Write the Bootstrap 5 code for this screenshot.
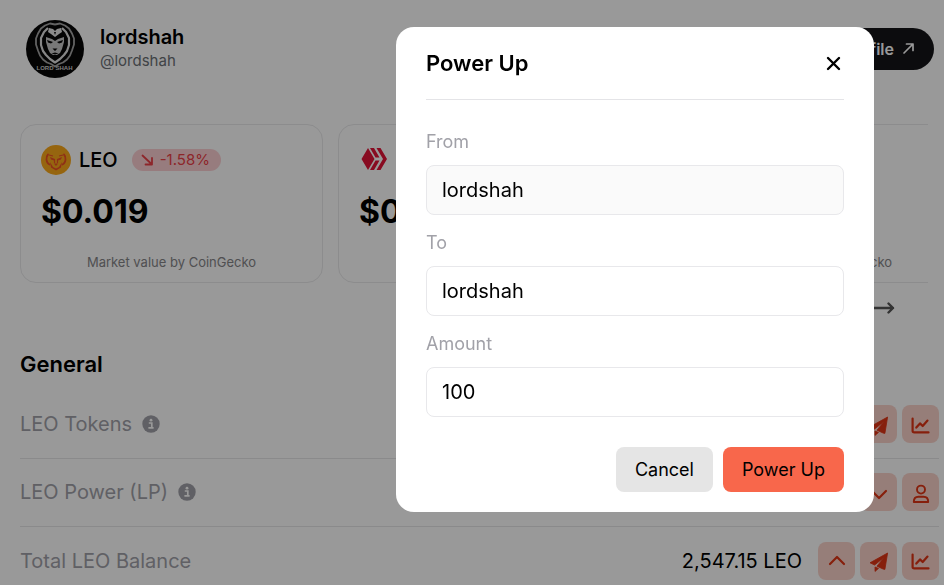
<!DOCTYPE html>
<html lang="en">
<head>
<meta charset="utf-8">
<meta name="viewport" content="width=device-width, initial-scale=1">
<title>Wallet</title>
<link rel="stylesheet" href="https://cdn.jsdelivr.net/npm/bootstrap@5.3.0/dist/css/bootstrap.min.css">
<style>
  body { font-family: Inter, "Liberation Sans", sans-serif; color: #000; background: #fff; overflow: hidden; }
  .page-head { padding: 20px 10px 0 26px; }
  .user-block { margin-left: 16px; padding-bottom: 2px; }
  .user-name { font-size: 20px; line-height: 26px; }
  .user-handle { font-size: 15px; line-height: 22px; color: #6b7075; }
  .btn-profile { background: #151518; color: #fff; font-size: 16px; line-height: 24px; padding: 9px 18px 9px 24px; border: 0; }
  .token-strip { margin: 46px 16px 0 20px; gap: 15px; overflow: hidden; }
  .token-card { flex: 0 0 303px; height: 159px; padding: 20px 20px 10px; border: 1px solid #e9e9eb; border-radius: 16px; }
  .token-name { font-size: 20px; line-height: 30px; }
  .change-pill { margin-left: 6px; padding: 0 11px 0 8px; gap: 6px; font-size: 15px; line-height: 22px; background: #fccfd3; color: #ec4047; }
  .token-price { margin-top: 15px; font-size: 32px; line-height: 44px; }
  .token-source { font-size: 13px; line-height: 20px; color: #858588; }
  .strip-nav { padding: 14px 48px 0 0; gap: 16px; color: #555; }
  .plain-btn { padding: 0; border: 0; background: none; color: inherit; line-height: 0; }
  .balances { padding: 30px 5px 0 20px; }
  .balances h2 { font-size: 22px; line-height: 30px; margin: 0 0 12px; }
  .balance-row { height: 68px; padding-bottom: 1px; border-bottom: 1px solid #e6e6e8; font-size: 20px; }
  .balance-row:last-child { border-bottom: 0; }
  .balance-label { color: #a1a1a8; gap: 10px; }
  .tools { gap: 5px; margin-left: 16px; }
  .tool { width: 37px; height: 38px; border: 0; border-radius: 8px; background: #fad3ca; color: #e03414; padding: 0; }
  .overlay { background: rgba(0, 0, 0, .4); overflow: hidden; }
  .power-dialog { max-width: 478px; margin: 27px 70px 0 auto; }
  .power-box { border: 0; border-radius: 18px; padding: 0 30px 20px; color: #000; }
  .power-head { height: 73px; padding: 0; border-color: #e4e4e7; border-radius: 0; }
  .power-head h1 { font-size: 22px; line-height: 30px; }
  .power-body { padding: 28px 0 0; gap: 14px; }
  .power-body label { display: block; font-size: 18px; line-height: 27px; margin-bottom: 10px; color: #a1a1a8; }
  .power-body .form-control { height: 50px; padding: 0 15px; border: 1px solid #e8e8eb; border-radius: 8px; font-size: 20px; color: #000; }
  .power-body .form-control[readonly] { background: #fafafa; }
  .power-foot { padding-top: 30px; gap: 10px; }
  .power-foot .btn { padding: 9px 19px; font-size: 18px; line-height: 27px; border: 0; border-radius: 8px; color: #000; }
  .power-foot .btn-cancel { background: #e5e5e5; }
  .power-foot .btn-power { background: #f8674b; }
</style>
<script src="https://cdn.jsdelivr.net/npm/bootstrap@5.3.0/dist/js/bootstrap.bundle.min.js"></script>
</head>
<body>
<svg class="d-none" aria-hidden="true">
  <symbol id="info" viewBox="0 0 18 18"><circle cx="9" cy="9" r="8.7" fill="currentColor"/><circle cx="9" cy="5.2" r="1.4" fill="#fff"/><path d="M6.8 8h3v4.6M6.4 12.8h5.2" fill="none" stroke="#fff" stroke-width="1.7"/></symbol>
  <symbol id="plane" viewBox="0 0 20 20"><path d="M18.600 1 1 10.800l4.600 2.200L15 5.500 8 14.200l6 2.800 1.900.4zM6 15v4.400l3.500-3z" fill="currentColor" stroke="currentColor" stroke-width=".8" stroke-linejoin="round"/></symbol>
  <symbol id="chart" viewBox="0 0 20 20"><path d="M1.600 2.500v12.300a1.600 1.600 0 0 0 1.600 1.600H17.500M5.300 11.600l3.700-4.200 2.700 2.600 4.800-5.400" fill="none" stroke="currentColor" stroke-width="2.200" stroke-linecap="round" stroke-linejoin="round"/></symbol>
  <symbol id="person" viewBox="0 0 20 20"><circle cx="10" cy="5.600" r="4" fill="none" stroke="currentColor" stroke-width="1.900"/><path d="M2.800 18c0-3.600 2.200-5.200 4.600-5.200h5.200c2.400 0 4.600 1.600 4.600 5.200z" fill="none" stroke="currentColor" stroke-width="1.900" stroke-linejoin="round"/></symbol>
  <symbol id="up" viewBox="0 0 20 20"><path d="m3 12 7-7 7 7" fill="none" stroke="currentColor" stroke-width="2.200" stroke-linecap="round" stroke-linejoin="round"/></symbol>
  <symbol id="down" viewBox="0 0 20 20"><path d="m3 7 7 7 7-7" fill="none" stroke="currentColor" stroke-width="2.200" stroke-linecap="round" stroke-linejoin="round"/></symbol>
</svg>

<header class="page-head d-flex align-items-center">
  <svg width="58" height="58" viewBox="0 0 58 58" role="img" aria-label="lordshah avatar">
    <circle cx="29" cy="29" r="29" fill="#070707"/>
    <g fill="none" stroke-linejoin="round">
      <path d="M29 4.500l-5-1-5 2-4 3-3 5-2 5 0 6 2 6 2 5 3 4 4 3 4 1.500 4 2.500 4-2.500 4-1.500 4-3 3-4 2-5 2-6 0-6-2-5-3-5-4-3-5-2z" stroke="#a4a4a4" stroke-width="1.800"/>
      <path d="M22 8l-4 4-3 6 0 7 2 6 3 4 4 4 5 3.500 5-3.500 4-4 3-4 2-6 0-7-3-6-4-4" stroke="#e0e0e0" stroke-width="2.200"/>
    </g>
    <path d="m23 8 4 1 2 2 2-2 4-1 1 4-3 2-4 3-4-3-3-2z" fill="#e8e8e8"/>
    <path d="m20 17 6 2 3 2 3-2 6-2 0 5-2 7-2 4-3 2h-4l-3-2-2-4-2-7z" fill="#c8c8c8"/>
    <path d="m21 20 6 2-2 1.500-3-1zM37 20l-6 2 2 1.500 3-1zM26.500 28.500h5L29 31zM25.500 33.500l3.500-1 3.500 1-3.500 1zM28 12h2l-1 3z" fill="#070707"/>
    <g fill="#d0d0d0" font-family="Liberation Sans, sans-serif" font-weight="700" font-size="6" text-anchor="middle"><text x="19" y="50">LORD</text><text x="38" y="50">SHAH</text></g>
  </svg>
  <div class="user-block">
    <div class="user-name fw-semibold">lordshah</div>
    <div class="user-handle">@lordshah</div>
  </div>
  <a href="#" class="btn btn-profile rounded-pill fw-semibold ms-auto d-flex align-items-center">View Profile
    <svg class="ms-2" width="14" height="14" viewBox="0 0 14 14" fill="none" stroke="currentColor" stroke-width="1.700" stroke-linecap="round" stroke-linejoin="round" aria-hidden="true"><path d="m2 11 9-9M4.500 2H11v6.500"/></svg></a>
</header>

<main>
  <section class="token-strip d-flex" aria-label="Market values">
    <article class="token-card d-flex flex-column">
      <div class="d-flex align-items-center gap-2">
        <svg width="30" height="30" viewBox="0 0 30 30" aria-hidden="true"><circle cx="15" cy="15" r="15" fill="#fba91a"/><path d="M7 9.500C4.500 12 5 18 8.500 19.500M23 9.500c2.500 2.500 2 8.500-1.500 10" fill="none" stroke="#ee5026" stroke-width="1.800" stroke-linecap="round"/><path d="m9 17 3 5 3 1.500 3-1.500 3-5-1 5.500-5 3-5-3zM9 12l5 2-1 1.500-3-1zM21 12l-5 2 1 1.500 3-1zM12.800 18.500h4.400L15 21z" fill="#ee5026"/><path d="m8 10 4 1M22 10l-4 1M13.500 14v4M16.500 14v4" stroke="#ee5026" stroke-width="1.200"/></svg>
        <span class="token-name fw-medium">LEO</span>
        <span class="change-pill rounded-pill d-flex align-items-center"><svg width="14" height="14" viewBox="0 0 14 14" fill="none" stroke="currentColor" stroke-width="1.800" stroke-linecap="round" stroke-linejoin="round" aria-hidden="true"><path d="m2.500 2.500 9 8.500M12 5v6.500H5.500"/></svg>-1.58%</span>
      </div>
      <div class="token-price fw-bold">$0.019</div>
      <div class="token-source text-center mt-auto">Market value by CoinGecko</div>
    </article>
    <article class="token-card d-flex flex-column">
      <div class="d-flex align-items-center gap-2">
        <svg width="30" height="30" viewBox="0 0 30 30" fill="#e31337" aria-hidden="true"><path d="M2.500 14 9 3l6.500 11L9 25zM11 3h4l5.500 9.500h-4zM17.500 3h4L28 14l-6.500 11h-4L24 14zM16.500 15.500h4L15 25h-4z"/></svg>
        <span class="token-name fw-medium">HIVE</span>
      </div>
      <div class="token-price fw-bold">$0.24</div>
      <div class="token-source text-center mt-auto">Market value by CoinGecko</div>
    </article>
    <article class="token-card d-flex flex-column">
      <div class="token-name fw-medium">HBD</div>
      <div class="token-price fw-bold">$0.99</div>
      <div class="token-source text-center mt-auto">Market value by CoinGecko</div>
    </article>
  </section>
  <div class="strip-nav d-flex justify-content-end">
    <button type="button" class="plain-btn" aria-label="Next"><svg width="24" height="22" viewBox="0 0 24 22" fill="none" stroke="currentColor" stroke-width="2.400" stroke-linecap="round" stroke-linejoin="round"><path d="M1 11h20M16.500 6.500 21 11l-4.500 4.500"/></svg></button>
  </div>

  <section class="balances">
    <h2 class="fw-semibold">General</h2>
    <div class="balance-row d-flex align-items-center">
      <span class="balance-label d-flex align-items-center">LEO Tokens <svg width="18" height="18" aria-hidden="true"><use href="#info"/></svg></span>
      <div class="tools d-flex ms-auto">
        <button type="button" class="tool" aria-label="Send LEO"><svg width="20" height="20"><use href="#plane"/></svg></button>
        <button type="button" class="tool" aria-label="LEO chart"><svg width="20" height="20"><use href="#chart"/></svg></button>
      </div>
    </div>
    <div class="balance-row d-flex align-items-center">
      <span class="balance-label d-flex align-items-center">LEO Power (LP) <svg width="18" height="18" aria-hidden="true"><use href="#info"/></svg></span>
      <div class="tools d-flex ms-auto">
        <button type="button" class="tool" aria-label="Power down"><svg width="20" height="20"><use href="#down"/></svg></button>
        <button type="button" class="tool" aria-label="Delegate"><svg width="20" height="20"><use href="#person"/></svg></button>
      </div>
    </div>
    <div class="balance-row d-flex align-items-center">
      <span class="balance-label">Total LEO Balance</span>
      <span class="ms-auto">2,547.15 LEO</span>
      <div class="tools d-flex">
        <button type="button" class="tool" aria-label="Power up"><svg width="20" height="20"><use href="#up"/></svg></button>
        <button type="button" class="tool" aria-label="Send balance"><svg width="20" height="20"><use href="#plane"/></svg></button>
        <button type="button" class="tool" aria-label="Balance chart"><svg width="20" height="20"><use href="#chart"/></svg></button>
      </div>
    </div>
  </section>
</main>

<div class="modal overlay d-block" role="dialog" aria-modal="true" aria-labelledby="power-title">
  <div class="modal-dialog power-dialog">
    <form class="modal-content power-box">
      <div class="modal-header power-head">
        <h1 id="power-title" class="fw-semibold m-0">Power Up</h1>
        <button type="button" class="plain-btn" aria-label="Close"><svg width="21" height="21" viewBox="0 0 21 21" fill="none" stroke="currentColor" stroke-width="2.400" stroke-linecap="round"><path d="m5 5 11 11M16 5 5 16"/></svg></button>
      </div>
      <div class="power-body d-flex flex-column">
        <div><label for="from">From</label><input id="from" class="form-control" value="lordshah" readonly></div>
        <div><label for="to">To</label><input id="to" class="form-control" value="lordshah"></div>
        <div><label for="amount">Amount</label><input id="amount" class="form-control" value="100" inputmode="decimal"></div>
      </div>
      <div class="power-foot d-flex justify-content-end">
        <button type="button" class="btn btn-cancel">Cancel</button>
        <button type="submit" class="btn btn-power">Power Up</button>
      </div>
    </form>
  </div>
</div>
</body>
</html>
